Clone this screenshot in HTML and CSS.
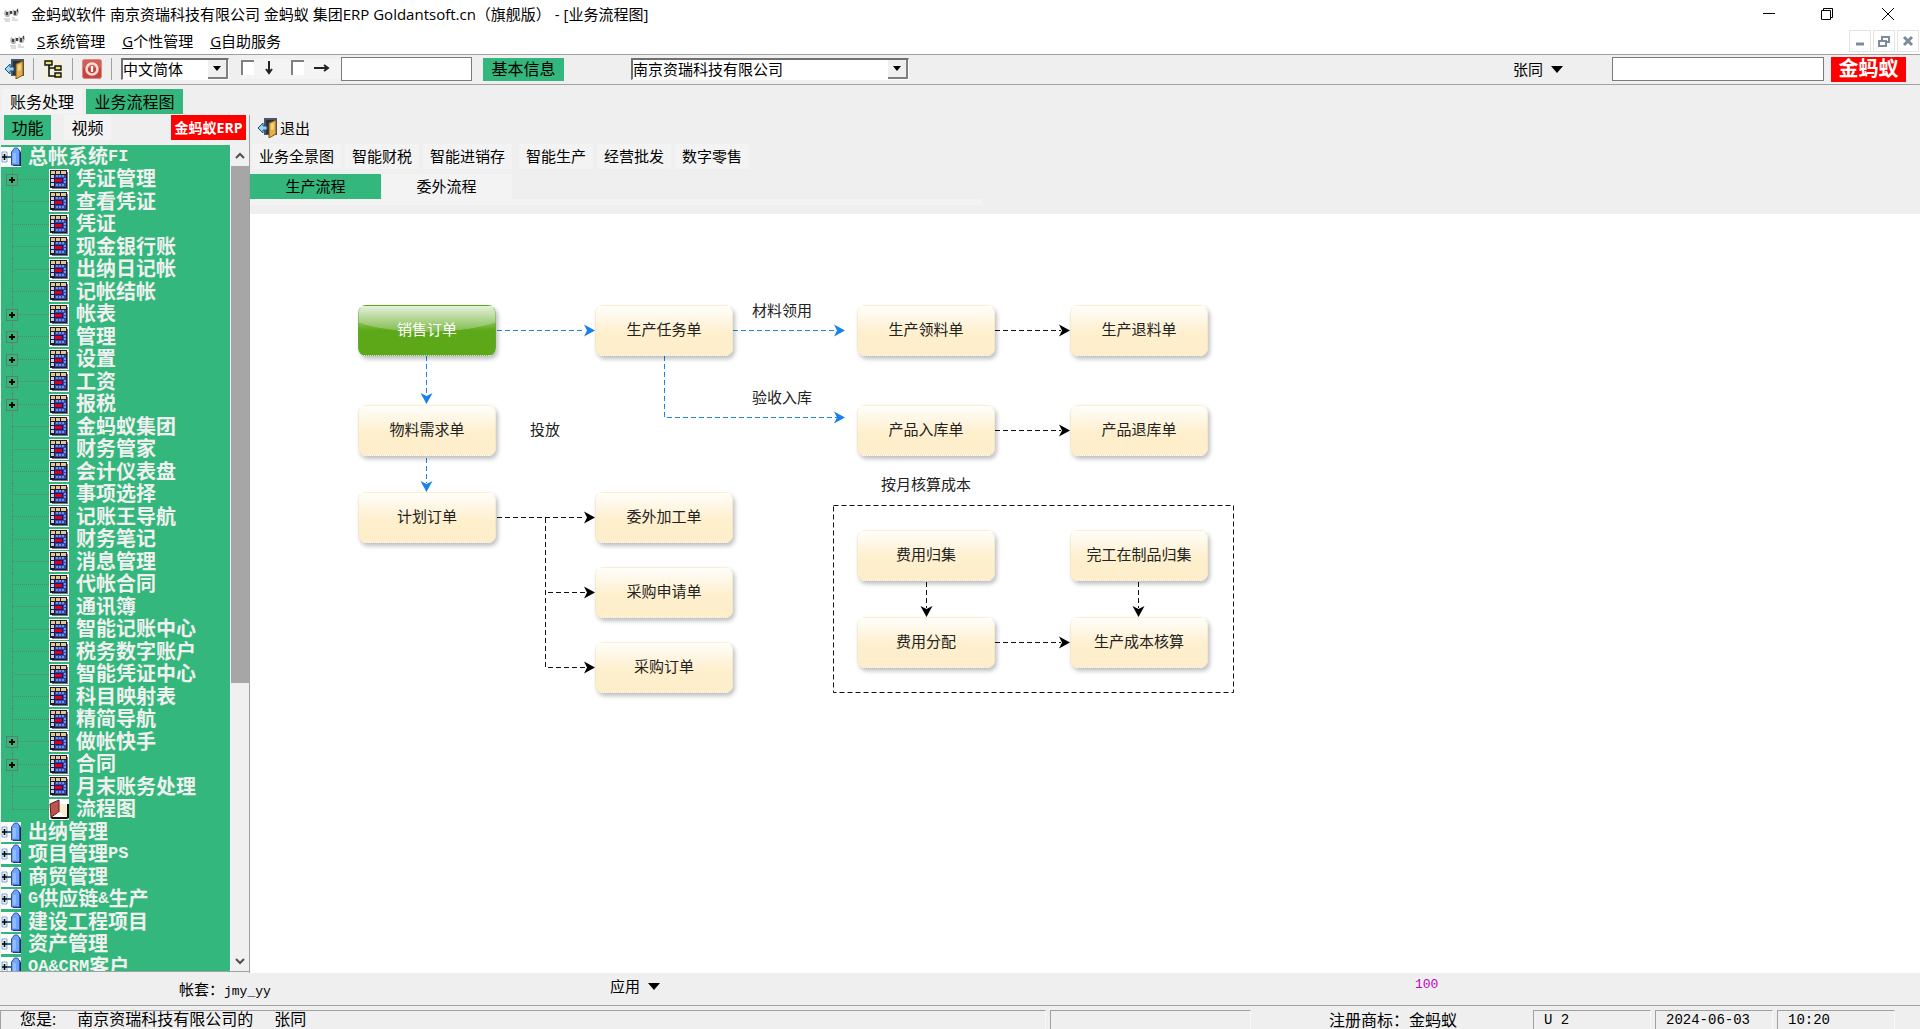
FILE: index.html
```html
<!DOCTYPE html>
<html lang="zh-CN">
<head>
<meta charset="utf-8">
<title>金蚂蚁软件 - 业务流程图</title>
<link rel="stylesheet" href="styles.css">
</head>
<body>
<svg class="defs" aria-hidden="true">
  <symbol id="ant" viewBox="0 0 20 16">
    <path d="M3 4l3 2 2-2 1 3-2 4-3 0-2-3zM11 3l2 2 3-3 1 4-2 4-3 0-2-3z" fill="#b4b4b4"/>
    <path d="M4 6h2v3H4zM8 5h2v3H8zM12 5h2v4h-2zM15 3h1v3h-1z" fill="#444"/>
    <path d="M2 13h6M3 15h5M10 14h6M10 12h3" stroke="#b8b8b8"/>
  </symbol>
  <symbol id="door" viewBox="0 0 20 20">
    <path d="M7 0h13v17H7z" fill="#4a5768"/>
    <path d="M9 2h8v14H9z" fill="#27303c"/>
    <path d="M12 5l7-3v14l-7 4z" fill="#e3b04b" stroke="#7a5310"/>
    <path d="M14 6l3-1v6l-3 1z" fill="#f3d183"/>
    <path d="M1 10l5-5v3h4v4H6v3z" fill="#9ad6f4" stroke="#1c4f80"/>
  </symbol>
  <symbol id="outline" viewBox="0 0 20 20">
    <path d="M0 0h20v20H0z" fill="#f3f1dc"/>
    <path d="M2 2h7v4H2zM12 7h6v4h-6zM12 14h6v4h-6z" fill="#e9e36b" stroke="#111" stroke-width="1.4"/>
    <path d="M6 6v11h6M6 9h6" fill="none" stroke="#111" stroke-width="1.600"/>
  </symbol>
  <symbol id="power" viewBox="0 0 20 20">
    <rect x=".5" y=".5" width="19" height="19" rx="2" fill="#c9423c" stroke="#dd8a86"/>
    <path d="M1 1h18v8H1z" fill="#d9716b" opacity=".6"/>
    <circle cx="10" cy="10" r="5.5" fill="none" stroke="#f6dddb" stroke-width="2.500"/>
    <path d="M10 7v6" stroke="#fff" stroke-width="2.2"/>
  </symbol>
  <symbol id="grid" viewBox="0 0 20 21">
    <path d="M0 0h20v21H0z" fill="#fff"/>
    <path d="M18 3h1v17H3v-2h15z" fill="#777"/>
    <path d="M1 1h17v18H1z" fill="#1a1a30"/>
    <path d="M2 2h4v3H2zM7 2h4v3H7zM12 2h5v3h-5z" fill="#e6c98a"/>
    <path d="M2 6h3v3H2zM2 10h3v3H2zM2 14h3v3H2z" fill="#cfd3da"/>
    <path d="M6 6h11v12H6z" fill="#3446a8"/>
    <path d="M7 6h2v2H7zM10 6h2v2h-2zM13 6h2v2h-2zM15 9h2v2h-2zM15 12h2v2h-2zM7 15h2v2H7zM10 15h2v2h-2zM13 15h2v2h-2z" fill="#6d95e6"/>
    <path d="M5 9h9v5H5z" fill="#1b1470"/>
    <path d="M6 10h7v3H6z" fill="#e00014"/>
  </symbol>
  <symbol id="book" viewBox="0 0 20 21">
    <path d="M0 0h20v21H0z" fill="#fff"/>
    <path d="M3 5h15v13H3z" fill="#f4ecd0"/>
    <path d="M18 5h2v14l-2 1H3l-2-2h17z" fill="#111"/>
    <path d="M1 5l9-4v12l-8 5z" fill="#bd5450" stroke="#5c1a18"/>
    <path d="M10 13l7 5H4z" fill="#fffdf2"/>
  </symbol>
  <symbol id="folder" viewBox="0 0 20 20">
    <path d="M0 0h20v20H0z" fill="#fff"/>
    <path d="M1 5h5v10H1z" fill="#eaf5ff" stroke="#7aa7d8"/>
    <path d="M6 10h4" stroke="#2b6cb0" stroke-width="2"/>
    <path d="M3.500 7v6M1 10h5" stroke="#000" stroke-width="1.600"/>
    <path d="M13 3h6l1 3v13h-8z" fill="#17205c"/>
    <path d="M10.500 5l3-4h3l2 3v14h-8z" fill="#6fa5fa" stroke="#2c50b8"/>
    <path d="M12 6h3v10h-3z" fill="#93bdff"/>
  </symbol>
</svg>

<header>
  <div class="titlebar">
    <svg class="i20" viewBox="0 0 20 16"><use href="#ant"/></svg>
    <h1>金蚂蚁软件 南京资瑞科技有限公司 金蚂蚁 集团ERP Goldantsoft.cn（旗舰版） - [业务流程图]</h1>
    <div class="winbtns">
      <button aria-label="最小化"><svg width="12" height="12" viewBox="0 0 12 12"><path d="M0 5.500h12"/></svg></button>
      <button aria-label="还原"><svg width="12" height="12" viewBox="0 0 12 12"><path d="M.5 2.500h9v9h-9zM2.500 2.500v-2h9v9h-2"/></svg></button>
      <button aria-label="关闭"><svg width="12" height="12" viewBox="0 0 12 12"><path d="M0 0l12 12M12 0L0 12"/></svg></button>
    </div>
  </div>
  <nav class="menubar">
    <svg class="i20" viewBox="0 0 20 16"><use href="#ant"/></svg>
    <button><u>S</u>系统管理</button>
    <button><u>G</u>个性管理</button>
    <button><u>G</u>自助服务</button>
    <div class="mdi">
      <button aria-label="最小化子窗口"><svg width="12" height="12" viewBox="0 0 12 12"><path d="M2 9h8"/></svg></button>
      <button aria-label="还原子窗口"><svg width="12" height="12" viewBox="0 0 12 12"><path d="M1 6h7v5H1zM4 5V2h7v5H9" class="thin"/></svg></button>
      <button aria-label="关闭子窗口"><svg width="12" height="12" viewBox="0 0 12 12"><path d="M2 2l8 8M10 2l-8 8"/></svg></button>
    </div>
  </nav>
  <div class="toolbar">
    <button class="tool" aria-label="退出"><svg class="i20" viewBox="0 0 20 20"><use href="#door"/></svg></button>
    <button class="tool" aria-label="树形"><svg class="i20" viewBox="0 0 20 20"><use href="#outline"/></svg></button>
    <button class="tool" aria-label="关机"><svg class="i20" viewBox="0 0 20 20"><use href="#power"/></svg></button>
    <span class="combo lang"><select aria-label="语言"><option>中文简体</option></select><i><svg width="8" height="5" viewBox="0 0 8 5"><path d="M0 0h8L4 5z"/></svg></i></span>
    <label class="tick"><input type="checkbox"><svg width="10" height="14" viewBox="0 0 10 14"><path d="M5 0v12M2 8l3 4 3-4"/></svg></label>
    <label class="tick"><input type="checkbox"><svg width="16" height="10" viewBox="0 0 16 10"><path d="M0 5h14M10 2l4 3-4 3"/></svg></label>
    <input class="field quick" type="text" aria-label="快速查找">
    <button class="tab on info">基本信息</button>
    <span class="combo company"><select aria-label="公司"><option>南京资瑞科技有限公司</option></select><i><svg width="8" height="5" viewBox="0 0 8 5"><path d="M0 0h8L4 5z"/></svg></i></span>
    <button class="drop user">张同 <svg width="12" height="7" viewBox="0 0 12 7"><path d="M0 0h12L6 7z"/></svg></button>
    <input class="field search" type="text" aria-label="搜索">
    <button class="brand">金蚂蚁</button>
  </div>
  <nav class="pagetabs">
    <button class="tab">账务处理</button>
    <button class="tab on">业务流程图</button>
  </nav>
</header>

<main>
  <aside>
    <div class="sidehead">
      <button class="tab on">功能</button>
      <button class="tab">视频</button>
      <button class="erp">金蚂蚁ERP</button>
    </div>
    <div class="treebox">
      <div class="tree">
        <ul>
          <li class="root"><svg class="i20" viewBox="0 0 20 20"><use href="#folder"/></svg>总帐系统<b>FI</b></li>
          <li class="leaf"><button class="plus" aria-label="展开"></button><svg viewBox="0 0 20 21"><use href="#grid"/></svg>凭证管理</li>
          <li class="leaf"><svg viewBox="0 0 20 21"><use href="#grid"/></svg>查看凭证</li>
          <li class="leaf"><svg viewBox="0 0 20 21"><use href="#grid"/></svg>凭证</li>
          <li class="leaf"><svg viewBox="0 0 20 21"><use href="#grid"/></svg>现金银行账</li>
          <li class="leaf"><svg viewBox="0 0 20 21"><use href="#grid"/></svg>出纳日记帐</li>
          <li class="leaf"><svg viewBox="0 0 20 21"><use href="#grid"/></svg>记帐结帐</li>
          <li class="leaf"><button class="plus" aria-label="展开"></button><svg viewBox="0 0 20 21"><use href="#grid"/></svg>帐表</li>
          <li class="leaf"><button class="plus" aria-label="展开"></button><svg viewBox="0 0 20 21"><use href="#grid"/></svg>管理</li>
          <li class="leaf"><button class="plus" aria-label="展开"></button><svg viewBox="0 0 20 21"><use href="#grid"/></svg>设置</li>
          <li class="leaf"><button class="plus" aria-label="展开"></button><svg viewBox="0 0 20 21"><use href="#grid"/></svg>工资</li>
          <li class="leaf"><button class="plus" aria-label="展开"></button><svg viewBox="0 0 20 21"><use href="#grid"/></svg>报税</li>
          <li class="leaf"><svg viewBox="0 0 20 21"><use href="#grid"/></svg>金蚂蚁集团</li>
          <li class="leaf"><svg viewBox="0 0 20 21"><use href="#grid"/></svg>财务管家</li>
          <li class="leaf"><svg viewBox="0 0 20 21"><use href="#grid"/></svg>会计仪表盘</li>
          <li class="leaf"><svg viewBox="0 0 20 21"><use href="#grid"/></svg>事项选择</li>
          <li class="leaf"><svg viewBox="0 0 20 21"><use href="#grid"/></svg>记账王导航</li>
          <li class="leaf"><svg viewBox="0 0 20 21"><use href="#grid"/></svg>财务笔记</li>
          <li class="leaf"><svg viewBox="0 0 20 21"><use href="#grid"/></svg>消息管理</li>
          <li class="leaf"><svg viewBox="0 0 20 21"><use href="#grid"/></svg>代帐合同</li>
          <li class="leaf"><svg viewBox="0 0 20 21"><use href="#grid"/></svg>通讯簿</li>
          <li class="leaf"><svg viewBox="0 0 20 21"><use href="#grid"/></svg>智能记账中心</li>
          <li class="leaf"><svg viewBox="0 0 20 21"><use href="#grid"/></svg>税务数字账户</li>
          <li class="leaf"><svg viewBox="0 0 20 21"><use href="#grid"/></svg>智能凭证中心</li>
          <li class="leaf"><svg viewBox="0 0 20 21"><use href="#grid"/></svg>科目映射表</li>
          <li class="leaf"><svg viewBox="0 0 20 21"><use href="#grid"/></svg>精简导航</li>
          <li class="leaf"><button class="plus" aria-label="展开"></button><svg viewBox="0 0 20 21"><use href="#grid"/></svg>做帐快手</li>
          <li class="leaf"><button class="plus" aria-label="展开"></button><svg viewBox="0 0 20 21"><use href="#grid"/></svg>合同</li>
          <li class="leaf"><svg viewBox="0 0 20 21"><use href="#grid"/></svg>月末账务处理</li>
          <li class="leaf last"><svg viewBox="0 0 20 21"><use href="#book"/></svg>流程图</li>
          <li class="root"><svg class="i20" viewBox="0 0 20 20"><use href="#folder"/></svg>出纳管理</li>
          <li class="root"><svg class="i20" viewBox="0 0 20 20"><use href="#folder"/></svg>项目管理<b>PS</b></li>
          <li class="root"><svg class="i20" viewBox="0 0 20 20"><use href="#folder"/></svg>商贸管理</li>
          <li class="root"><svg class="i20" viewBox="0 0 20 20"><use href="#folder"/></svg><b>G</b>供应链<b>&amp;</b>生产</li>
          <li class="root"><svg class="i20" viewBox="0 0 20 20"><use href="#folder"/></svg>建设工程项目</li>
          <li class="root"><svg class="i20" viewBox="0 0 20 20"><use href="#folder"/></svg>资产管理</li>
          <li class="root"><svg class="i20" viewBox="0 0 20 20"><use href="#folder"/></svg><b>OA&amp;CRM</b>客户</li>
        </ul>
      </div>
      <div class="scroll">
        <button aria-label="向上滚动"><svg width="10" height="8" viewBox="0 0 10 8"><path d="M1 6l4-4 4 4"/></svg></button>
        <div class="track"><div class="thumb"></div></div>
        <button aria-label="向下滚动"><svg width="10" height="8" viewBox="0 0 10 8"><path d="M1 2l4 4 4-4"/></svg></button>
      </div>
    </div>
  </aside>

  <section class="work">
    <div class="worktop">
      <button class="exit"><svg class="i20" viewBox="0 0 20 20"><use href="#door"/></svg>退出</button>
      <nav class="modules">
        <button class="tab">业务全景图</button>
        <button class="tab">智能财税</button>
        <button class="tab">智能进销存</button>
        <button class="tab">智能生产</button>
        <button class="tab">经营批发</button>
        <button class="tab">数字零售</button>
      </nav>
      <nav class="flows">
        <button class="tab on">生产流程</button>
        <button class="tab">委外流程</button>
      </nav>
      <div class="strip"></div>
    </div>
    <div class="canvas">
      <svg class="wires" width="1000" height="520" viewBox="0 0 1000 520">
        <g class="blue">
          <path d="M247 116.500h88M483 116.500h104M176.500 142v40M176.500 244v25M414.500 142v61.500H587"/>
          <path class="tip" d="M345 116.500l-11-6 3 6-3 6zM595 116.500l-11-6 3 6-3 6zM595 203.500l-11-6 3 6-3 6zM176.500 190l-6-11 6 3 6-3zM176.500 278l-6-11 6 3 6-3z"/>
        </g>
        <g class="black">
          <path d="M745 116.500h66M745 216.500h66M247 303.500h88M295.500 304v150M298 378.500h37M298 453.500h37M745 428.500h66M676.500 368v26M888.500 368v26"/>
          <path d="M583.500 291.500h400v187h-400z"/>
          <path class="tip" d="M820 116.500l-11-6 3 6-3 6zM820 216.500l-11-6 3 6-3 6zM345 303.500l-11-6 3 6-3 6zM345 378.500l-11-6 3 6-3 6zM345 453.500l-11-6 3 6-3 6zM820 428.500l-11-6 3 6-3 6zM676.500 403l-6-11 6 3 6-3zM888.500 403l-6-11 6 3 6-3z"/>
        </g>
      </svg>
      <button class="node c1 r1 start">销售订单</button>
      <button class="node c2 r1">生产任务单</button>
      <button class="node c3 r1">生产领料单</button>
      <button class="node c4 r1">生产退料单</button>
      <button class="node c1 r2">物料需求单</button>
      <button class="node c3 r2">产品入库单</button>
      <button class="node c4 r2">产品退库单</button>
      <button class="node c1 r3">计划订单</button>
      <button class="node c2 r3">委外加工单</button>
      <button class="node c3 r4">费用归集</button>
      <button class="node c4 r4">完工在制品归集</button>
      <button class="node c2 r5">采购申请单</button>
      <button class="node c3 r6">费用分配</button>
      <button class="node c4 r6">生产成本核算</button>
      <button class="node c2 r7">采购订单</button>
      <span class="note n1">材料领用</span>
      <span class="note n2">验收入库</span>
      <span class="note n3">投放</span>
      <span class="note n4">按月核算成本</span>
    </div>
  </section>
</main>

<footer>
  <div class="appbar">
    <span class="book">帐套：<b>jmy_yy</b></span>
    <button class="drop apps">应用 <svg width="12" height="7" viewBox="0 0 12 7"><path d="M0 0h12L6 7z"/></svg></button>
    <span class="count">100</span>
  </div>
  <div class="status">
    <span class="cell who"><span>您是:</span><span>南京资瑞科技有限公司的</span><span>张同</span></span>
    <span class="cell blank"></span>
    <span class="mark">注册商标：金蚂蚁</span>
    <span class="cell num">U 2</span>
    <span class="cell num">2024-06-03</span>
    <span class="cell num">10:20</span>
  </div>
</footer>
</body>
</html>
```

FILE: styles.css
```css
* { box-sizing: border-box; }

body {
  margin: 0;
  height: 100vh;
  display: flex;
  flex-direction: column;
  overflow: hidden;
  background: #efefef;
  color: #000;
  font: 15px/20px "Open Sans", "Noto Sans CJK SC", sans-serif;
}

button, input, select { font: inherit; color: inherit; margin: 0; }

button {
  display: flex;
  align-items: center;
  justify-content: center;
  padding: 0;
  border: 0;
  background: none;
  white-space: nowrap;
}

header, footer { flex: none; }
.defs { position: absolute; width: 0; height: 0; }
.i20 { width: 20px; height: 20px; flex: none; }

/* title and menu */
.titlebar, .menubar { display: flex; align-items: center; background: #fff; }
.titlebar { height: 30px; padding: 0 0 2px 2px; }
.titlebar h1 { margin: 0 0 0 9px; font-size: 15px; font-weight: 400; white-space: pre; }
.winbtns { display: flex; margin-left: auto; }
.winbtns button { width: 58px; height: 28px; }
.winbtns button:last-child { width: 64px; }
.winbtns path { fill: none; stroke: #000; }
.menubar { height: 24px; padding: 0 1px 2px 8px; gap: 17px; }
.menubar .i20 { margin-right: -8px; }
.mdi { display: flex; gap: 2px; margin-left: auto; }
.mdi button { width: 22px; height: 22px; border: 1px solid #e4e4e4; }
.mdi path { fill: none; stroke: #7d8c9d; stroke-width: 3; }
.mdi .thin { stroke-width: 2; }

/* toolbar */
.toolbar {
  display: flex;
  align-items: center;
  height: 31px;
  padding: 0 14px 1px 4px;
  border-top: 1px solid #a0a0a0;
  border-bottom: 1px solid #a0a0a0;
}
.tool { height: 22px; padding-right: 9px; margin-right: 9px; border-right: 1px solid #a0a0a0; }
.combo {
  display: flex;
  height: 22px;
  border: 1px solid #fff;
  border-top: 2px solid #707070;
  border-left: 2px solid #707070;
  background: #fff;
}
.combo select { flex: 1; min-width: 0; padding: 0 0 2px; border: 0; background: none; appearance: none; line-height: 16px; }
.combo i {
  display: flex;
  align-items: center;
  justify-content: center;
  width: 20px;
  background: #f0f0f0;
  border-right: 2px solid #808080;
  border-bottom: 2px solid #808080;
  pointer-events: none;
}
.lang { width: 108px; margin-right: 12px; }
.company { flex: 0 1 278px; margin-left: 67px; }
.tick { display: flex; align-items: center; gap: 10px; width: 50px; height: 20px; padding-bottom: 3px; background: #f4f4f4; }
.tick input {
  appearance: none;
  width: 13px;
  height: 15px;
  background: #fff;
  border-top: 2px solid #808080;
  border-left: 2px solid #808080;
}
.tick path { fill: none; stroke: #222; stroke-width: 2; }
.field { height: 24px; border: 1px solid #7a7a7a; background: #fff; }
.quick { flex: 0 1 131px; min-width: 40px; }
.info { width: 81px; margin-left: 11px; }
.drop { gap: 8px; }
.user { margin-left: auto; margin-right: 49px; }
.search { flex: 0 1 212px; min-width: 80px; margin-right: 7px; }
.brand { width: 75px; height: 25px; background: #f00; color: #fff; font-size: 20px; font-weight: 700; }

/* tabs */
.tab { height: 25px; background: #f3f3f3; font-size: 16px; }
.tab.on { background: #34b77c; }
.info.tab { height: 23px; }
.pagetabs { display: flex; gap: 4px; padding: 4px 2px 1px; }
.pagetabs .tab { width: 80px; }
.pagetabs .on { width: 97px; }

/* sidebar */
main { flex: 1; min-height: 0; display: flex; }
aside { width: 250px; flex: none; display: flex; flex-direction: column; border-right: 1px solid #a0a0a0; }
.sidehead { display: flex; flex: none; height: 30px; padding-left: 4px; gap: 13px; }
.sidehead .tab { width: 47px; }
.sidehead .erp { width: 75px; height: 25px; margin: 0 3px 0 auto; background: #f00; color: #fff; font-size: 14px; font-weight: 700; }
.treebox { flex: 1; min-height: 0; display: flex; border-bottom: 1px solid #a0a0a0; margin-bottom: 1px; }
.tree {
  flex: 1;
  overflow: hidden;
  margin-left: 1px;
  background: #34b77c;
  color: #f0f0f0;
  font: 700 20px/22px "Liberation Sans", "Noto Sans CJK SC", sans-serif;
}
.tree ul { margin: 0; padding: 0; list-style: none; }
.tree li { position: relative; display: flex; align-items: center; height: 23px; white-space: nowrap; }
.tree li:nth-child(even) { height: 22px; }
.tree b { font: 700 17px/22px "Liberation Mono", monospace; }
.root svg { margin-right: 7px; }
.leaf svg { width: 20px; height: 21px; margin-right: 7px; }
.leaf::before { content: ""; position: absolute; left: 11px; top: 0; bottom: 0; border-left: 1px dotted #5f7d70; }
.leaf::after { content: ""; order: -1; width: 37px; margin-left: 11px; border-top: 1px dotted #5f7d70; }
.leaf.last::before { bottom: 50%; }
.plus {
  position: absolute;
  z-index: 1;
  left: 5px;
  top: 6px;
  width: 12px;
  height: 12px;
  border: 1px solid #5f7d70;
  background:
    linear-gradient(#000, #000) center / 6px 2px no-repeat,
    linear-gradient(#000, #000) center / 2px 6px no-repeat,
    #34b77c;
}
.scroll { width: 19px; display: flex; flex-direction: column; background: #f0f0f0; border-left: 1px solid #fff; }
.scroll button { height: 21px; }
.scroll path { fill: none; stroke: #505050; stroke-width: 2; }
.track { flex: 1; }
.thumb { height: 66%; background: #a6a6a6; }

/* work area */
.work { flex: 1; min-width: 0; display: flex; flex-direction: column; }
.worktop { flex: none; padding-bottom: 9px; }
.exit { height: 25px; margin: 0 0 4px 7px; gap: 3px; }
.modules { display: flex; gap: 4px; margin-bottom: 5px; padding-left: 2px; }
.modules .tab, .flows .tab { font-size: 15px; padding: 0 7px 2px; }
.modules .tab:nth-child(3) { margin-right: 3px; }
.flows { display: flex; }
.flows .tab { width: 131px; }
.strip { width: 732px; max-width: 100%; height: 6px; background: #f3f3f3; }
.canvas { position: relative; flex: 1; min-height: 0; overflow: hidden; background: #fff; }
.wires { position: absolute; left: 0; top: 0; }
.wires path { fill: none; stroke-width: 1; stroke-dasharray: 5 3; }
.wires .tip { stroke: none; }
.blue path { stroke: #1a86e8; }
.blue .tip { fill: #1a80ee; }
.black path { stroke: #111; }
.black .tip { fill: #000; }
.node {
  position: absolute;
  width: 138px;
  height: 51px;
  padding-bottom: 4px;
  border: 1px dotted #e8dfc8;
  border-top-color: transparent;
  border-radius: 8px;
  background: linear-gradient(#fffefb, #feefcd 55%, #feeecb);
  box-shadow: 2px 3px 4px rgba(0, 0, 0, .25);
  color: #222;
}
.start {
  border-color: transparent #6aa84a #6aa84a;
  background: radial-gradient(ellipse 90px 26px at 50% 0, rgba(255, 255, 255, .25) 98%, transparent), linear-gradient(#dcecd0, #5ca818 50%);
  color: #fff;
}
.c1 { left: 108px; } .c2 { left: 345px; } .c3 { left: 607px; } .c4 { left: 820px; }
.r1 { top: 91px; } .r2 { top: 191px; } .r3 { top: 278px; } .r4 { top: 316px; }
.r5 { top: 353px; } .r6 { top: 403px; } .r7 { top: 428px; }
.note { position: absolute; color: #222; }
.n1 { left: 502px; top: 86px; } .n2 { left: 502px; top: 173px; }
.n3 { left: 280px; top: 205px; } .n4 { left: 631px; top: 260px; }

/* bottom bars */
.appbar { display: flex; align-items: center; height: 32px; padding-left: 179px; }
.appbar b { font: 13px/20px "Liberation Mono", monospace; }
.book { flex: 0 0 431px; padding-top: 2px; }
.apps { margin-right: auto; padding-bottom: 6px; }
.count { width: 505px; padding-bottom: 8px; color: #c000c0; font: 13px/20px "Liberation Mono", monospace; }
.status { display: flex; align-items: center; gap: 4px; height: 24px; padding: 4px 25px 0 0; border-top: 1px solid #a0a0a0; font-size: 16px; }
.cell { height: 19px; line-height: 16px; border: 1px solid #a0a0a0; border-right-color: #f8f8f8; border-bottom: 0; white-space: nowrap; }
.who { flex: 1; display: flex; gap: 21px; padding-left: 19px; }
.blank { width: 201px; }
.mark { width: 274px; padding-left: 74px; line-height: 18px; white-space: nowrap; }
.num { width: 118px; padding-left: 10px; font: 14px/18px "Liberation Mono", monospace; }
```
